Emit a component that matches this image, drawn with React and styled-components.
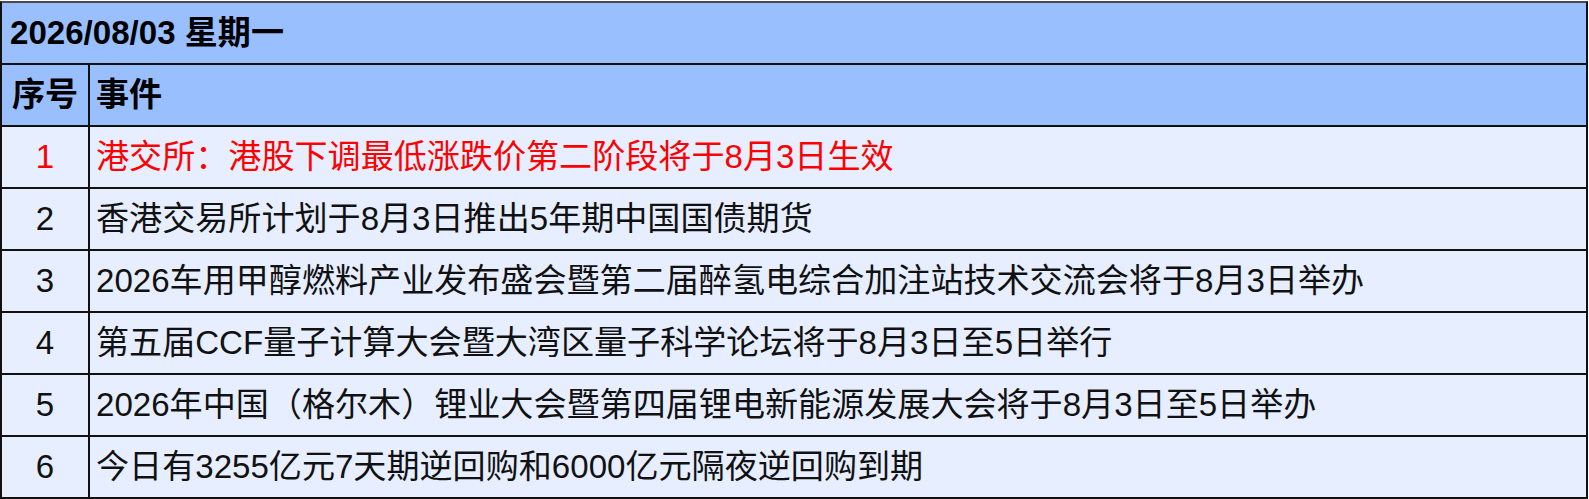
import React from 'react';
import styled, { createGlobalStyle } from 'styled-components';

const GlobalStyle = createGlobalStyle`
    html, body {
        margin: 0;
        padding: 0;
        background: #ffffff;
    }
    body {
        font-family: "Liberation Sans", "Noto Sans CJK SC", sans-serif;
    }
    * {
        box-sizing: border-box;
    }
`

const Page = styled.div`
    padding: 1px 1px 0 0;
`

const Sheet = styled.div`
    width: 1588px;
    border: 2px solid #111;
    border-top-color: #4a4a4a;
    font-size: 33.1px;
    line-height: 1;
`

const Title = styled.div`
    display: flex;
    align-items: center;
    height: 62px;
    padding-left: 8px;
    font-weight: bold;
    background: #99bfff;
    border-bottom: 2px solid #111;
    color: #000;
`

const Row = styled.div`
    display: grid;
    grid-template-columns: 88px 1fr;
    height: 62px;
    background: ${props => props.$head ? '#99bfff' : '#e6eeff'};
    font-weight: ${props => props.$head ? 'bold' : 'normal'};
    color: ${props => props.$hot ? '#ff0000' : props.$head ? '#000' : '#111'};
    border-bottom: 2px solid #111;

    &:last-child {
        height: 60px;
        border-bottom: none;
    }
`

const NumCell = styled.div`
    display: flex;
    align-items: center;
    justify-content: center;
    border-right: 2px solid #111;
`

const TextCell = styled.div`
    display: flex;
    align-items: center;
    padding-left: 6px;
    white-space: nowrap;
`

const events = [
    { id: 1, text: '港交所：港股下调最低涨跌价第二阶段将于8月3日生效', hot: true },
    { id: 2, text: '香港交易所计划于8月3日推出5年期中国国债期货' },
    { id: 3, text: '2026车用甲醇燃料产业发布盛会暨第二届醉氢电综合加注站技术交流会将于8月3日举办' },
    { id: 4, text: '第五届CCF量子计算大会暨大湾区量子科学论坛将于8月3日至5日举行' },
    { id: 5, text: '2026年中国（格尔木）锂业大会暨第四届锂电新能源发展大会将于8月3日至5日举办' },
    { id: 6, text: '今日有3255亿元7天期逆回购和6000亿元隔夜逆回购到期' },
]

export default function App() {
    return (
        <Page>
            <GlobalStyle />
            <Sheet>
                <Title>2026/08/03 星期一</Title>
                <Row $head>
                    <NumCell>序号</NumCell>
                    <TextCell>事件</TextCell>
                </Row>
                {events.map(e => (
                    <Row key={e.id} $hot={e.hot}>
                        <NumCell>{e.id}</NumCell>
                        <TextCell>{e.text}</TextCell>
                    </Row>
                ))}
            </Sheet>
        </Page>
    )
}
